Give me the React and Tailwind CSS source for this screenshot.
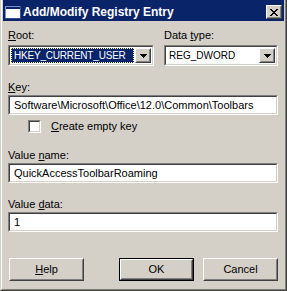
import React from "react";

function Sunken({ className = "", innerClassName = "", children }) {
  return (
    <div className={"border border-t-[#808080] border-l-[#808080] border-r-white border-b-white " + className}>
      <div className={"h-full border border-t-[#404040] border-l-[#404040] border-r-[#d4d0c8] border-b-[#d4d0c8] bg-white " + innerClassName}>
        {children}
      </div>
    </div>
  );
}

function Raised({ className = "", innerClassName = "", children }) {
  return (
    <div className={"border border-t-white border-l-white border-r-[#404040] border-b-[#404040] bg-[#d4d0c8] " + className}>
      <div className={"h-full border border-t-[#d4d0c8] border-l-[#d4d0c8] border-r-[#808080] border-b-[#808080] " + innerClassName}>
        {children}
      </div>
    </div>
  );
}

function DropButton() {
  return (
    <Raised className="w-[16px] h-full shrink-0" innerClassName="flex items-center justify-center">
      <svg width="7" height="4" viewBox="0 0 7 4" shapeRendering="crispEdges">
        <rect x="0" y="0" width="7" height="1" fill="#000" />
        <rect x="1" y="1" width="5" height="1" fill="#000" />
        <rect x="2" y="2" width="3" height="1" fill="#000" />
        <rect x="3" y="3" width="1" height="1" fill="#000" />
      </svg>
    </Raised>
  );
}

function Label({ children, className = "" }) {
  return <div className={"h-[13px] leading-[13px] " + className}>{children}</div>;
}

function Button({ children, isDefault = false, className = "" }) {
  const body = (
    <Raised className="h-full w-full" innerClassName="flex items-center justify-center leading-[13px]">
      {children}
    </Raised>
  );
  if (isDefault) {
    return <div className={"w-[75px] h-[23px] border border-black " + className}>{body}</div>;
  }
  return <div className={"w-[75px] h-[23px] " + className}>{body}</div>;
}

export default function App() {
  return (
    <div className="w-[287px] h-[291px] bg-[#d4d0c8] border-l border-r border-b border-l-[#d4d0c8] border-r-[#404040] border-b-[#404040] font-['Liberation_Sans',Arial,sans-serif] text-[11px] text-black">
      <div className="h-full flex flex-col border-l border-r border-b border-l-white border-r-[#808080] border-b-[#808080] px-[1px] pb-[1px]">
        {/* Title bar */}
        <div className="h-[21px] pt-[3px] bg-[#0a246a] flex items-center shrink-0">
          <svg className="ml-[2px] shrink-0" width="16" height="13" viewBox="0 0 16 13" shapeRendering="crispEdges">
            <rect x="0" y="0" width="16" height="13" fill="#7b8fc9" />
            <rect x="1" y="1" width="14" height="2" fill="#0a246a" />
            <rect x="1" y="3" width="14" height="9" fill="#ffffff" />
            <rect x="0" y="12" width="16" height="1" fill="#3a4f8f" />
            <rect x="15" y="0" width="1" height="13" fill="#3a4f8f" />
          </svg>
          <span className="ml-[2px] text-white font-bold text-[12px] leading-[14px] whitespace-nowrap">Add/Modify Registry Entry</span>
          <div className="flex-1" />
          <Raised className="w-[16px] h-[14px] mr-[2px] shrink-0" innerClassName="flex items-center justify-center">
            <svg width="8" height="7" viewBox="0 0 8 7" shapeRendering="crispEdges">
              <path d="M0 0h2v1h-2zM6 0h2v1h-2zM1 1h2v1h-2zM5 1h2v1h-2zM2 2h4v1h-4zM3 3h2v1h-2zM2 4h4v1h-4zM1 5h2v1h-2zM5 5h2v1h-2zM0 6h2v1h-2zM6 6h2v1h-2z" fill="#000" />
            </svg>
          </Raised>
        </div>

        {/* Body */}
        <div className="flex flex-col pl-[5px] pr-[6px]">
          <div className="flex gap-[10px] mt-[8px]">
            <div className="w-[146px] flex flex-col">
              <Label><span className="underline">R</span>oot:</Label>
              <Sunken className="h-[21px] mt-[3px]" innerClassName="flex p-[1px]">
                <div className="flex-1 bg-[#0a246a] border border-dotted border-[#ffff99] text-white flex items-center pl-[2px] text-[10px] tracking-[-0.2px] leading-[13px] whitespace-nowrap overflow-hidden mr-[1px]">
                  HKEY_CURRENT_USER
                </div>
                <DropButton />
              </Sunken>
            </div>
            <div className="w-[114px] flex flex-col">
              <Label>Data <span className="underline">t</span>ype:</Label>
              <Sunken className="h-[21px] mt-[3px]" innerClassName="flex p-[1px]">
                <div className="flex-1 flex items-center pl-[2px] text-[10px] leading-[13px] whitespace-nowrap overflow-hidden">
                  REG_DWORD
                </div>
                <DropButton />
              </Sunken>
            </div>
          </div>

          <Label className="mt-[15px]"><span className="underline">K</span>ey:</Label>
          <Sunken className="h-[20px] mt-[1px]" innerClassName="flex items-center pl-[4px] leading-[13px] whitespace-nowrap overflow-hidden">
            Software\Microsoft\Office\12.0\Common\Toolbars
          </Sunken>

          <div className="flex items-center mt-[5px] ml-[20px] h-[13px]">
            <Sunken className="w-[13px] h-[13px] shrink-0" />
            <span className="ml-[10px] leading-[13px]"><span className="underline">C</span>reate empty key</span>
          </div>

          <Label className="mt-[16px]">Value <span className="underline">n</span>ame:</Label>
          <Sunken className="h-[20px] mt-[1px]" innerClassName="flex items-center pl-[4px] leading-[13px] whitespace-nowrap overflow-hidden">
            QuickAccessToolbarRoaming
          </Sunken>

          <Label className="mt-[15px]">Value <span className="underline">d</span>ata:</Label>
          <Sunken className="h-[20px] mt-[1px]" innerClassName="flex items-center pl-[4px] leading-[13px] whitespace-nowrap overflow-hidden">
            1
          </Sunken>

          <div className="flex mt-[26px]">
            <Button className="ml-[1px]"><span><span className="underline">H</span>elp</span></Button>
            <div className="flex-1" />
            <Button isDefault>OK</Button>
            <Button className="ml-[9px]">Cancel</Button>
          </div>
        </div>
      </div>
    </div>
  );
}
